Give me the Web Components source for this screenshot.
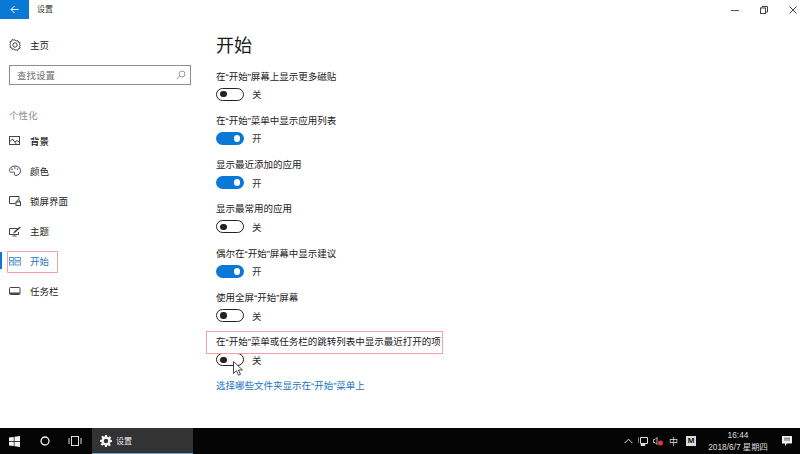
<!DOCTYPE html>
<html lang="zh-CN"><head><meta charset="utf-8"><title>设置</title>
<style>
html,body{margin:0;padding:0;height:454px;overflow:hidden;background:#fff}
body{display:flex;flex-direction:column;font-family:"Liberation Sans","Noto Sans CJK SC",sans-serif;color:#222}
</style></head><body>
<win-titlebar></win-titlebar>
<win-main>
  <settings-nav slot="nav">
    <nav-item icon="home" style="margin-bottom:5px">主页</nav-item>
    <search-box></search-box>
    <nav-head>个性化</nav-head>
    <nav-item icon="picture" bold>背景</nav-item>
    <nav-item icon="palette">颜色</nav-item>
    <nav-item icon="lock">锁屏界面</nav-item>
    <nav-item icon="theme">主题</nav-item>
    <nav-item icon="start" active>开始</nav-item>
    <nav-item icon="taskbar">任务栏</nav-item>
  </settings-nav>
  <settings-page slot="page">
    <toggle-row label="在“开始”屏幕上显示更多磁贴"></toggle-row>
    <toggle-row label="在“开始”菜单中显示应用列表" on></toggle-row>
    <toggle-row label="显示最近添加的应用" on></toggle-row>
    <toggle-row label="显示最常用的应用"></toggle-row>
    <toggle-row label="偶尔在“开始”屏幕中显示建议" on></toggle-row>
    <toggle-row label="使用全屏“开始”屏幕"></toggle-row>
    <toggle-row label="在“开始”菜单或任务栏的跳转列表中显示最近打开的项" mark></toggle-row>
    <page-link>选择哪些文件夹显示在“开始”菜单上</page-link>
  </settings-page>
</win-main>
<task-bar></task-bar>
<script>
const ICONS={
home:'<g fill="none" stroke="#444" stroke-width="1"><circle cx="6" cy="6" r="2.2"/><path d="M6 .8l1.2 1.3 1.7-.5.5 1.7 1.7.5-.5 1.700L11.200 6l-.6 1.500.5 1.700-1.700.5-.5 1.700-1.700-.5L6 11.200l-1.200-1.300-1.700.5-.5-1.700-1.700-.5.5-1.700L.8 6l.6-1.500-.5-1.700 1.700-.5.5-1.700 1.700.5z"/></g>',
picture:'<g fill="none" stroke="#444" stroke-width="1"><rect x=".5" y="1.500" width="10" height="8"/><path d="M.8 6.500l2.700-2.500 4 5.300M6 7l2-1.500 2.500 2"/></g>',
palette:'<g fill="none" stroke="#444" stroke-width="1"><path d="M6 1C2.800 1 .5 2.900.5 5.300c0 2 2 2.200 3.200 1.900 1.500-.4 2.300.3 1.800 1.400-.5 1.200.3 2 1.500 1.900 2.700-.3 4.500-2.300 4.500-4.800C11.500 2.800 9.200 1 6 1z"/></g><g fill="#444"><circle cx="3" cy="4.300" r=".8"/><circle cx="5.800" cy="3" r=".8"/><circle cx="8.600" cy="4" r=".8"/></g>',
lock:'<g fill="none" stroke="#444" stroke-width="1"><path d="M6.500 8.500H.5v-7h9.500v3"/><rect x="7" y="7" width="4.500" height="3.500"/><path d="M8 7V6a1.200 1.200 0 0 1 2.500 0v1"/></g>',
theme:'<g fill="none" stroke="#444" stroke-width="1"><path d="M8.500 3.500H.5v6h9V7M3.500 11h4"/></g><path d="M11 1.500L5.500 6 4 8.500l2.500-1L11.800 2.500z" fill="#444"/>',
start:'<g fill="none" stroke="#5a9fd6" stroke-width="1"><rect x=".5" y="2.500" width="4" height="3"/><rect x="6" y="2.500" width="5.500" height="3"/><rect x=".5" y="7" width="4" height="3"/><rect x="6" y="7" width="5.500" height="3"/></g>',
taskbar:'<g fill="none" stroke="#444" stroke-width="1"><rect x=".5" y="2.500" width="10.500" height="7" rx=".8"/></g><path d="M1 7.500h9.500v1.500H1z" fill="#444"/>'
};
const def=(n,c)=>customElements.define(n,c);
const shadow=(el,html)=>{el.attachShadow({mode:'open'}).innerHTML=html};

def('win-titlebar',class extends HTMLElement{connectedCallback(){shadow(this,`<style>
:host{display:flex;align-items:center;height:19px;flex:none;font-size:8px;color:#333}
.back{width:29px;height:19px;background:#0a78d7;display:flex;align-items:center;justify-content:center}
.t{margin-left:8px;flex:1;position:relative;top:-1px}
.c{box-sizing:border-box;width:29px;height:19px;padding-right:3px;display:flex;align-items:center;justify-content:flex-end}
svg{display:block}
</style>
<div class="back"><svg width="9" height="9" viewBox="0 0 9 9" fill="none" stroke="#fff" stroke-width="1"><path d="M8.500 4.500H1M4.500 1L1 4.500 4.500 8"/></svg></div>
<div class="t">设置</div>
<div class="c"><svg width="8" height="8" viewBox="0 0 8 8"><path d="M0 4.500h8" stroke="#555"/></svg></div>
<div class="c"><svg width="8" height="8" viewBox="0 0 8 8" fill="none" stroke="#444"><rect x=".5" y="2" width="5" height="5.500"/><path d="M2 2V.5h5.500V6H5.500"/></svg></div>
<div class="c"><svg width="8" height="8" viewBox="0 0 8 8" stroke="#444"><path d="M.5.500l7 7M7.500.500l-7 7"/></svg></div>`)}});

def('win-main',class extends HTMLElement{connectedCallback(){shadow(this,`<style>
:host{display:flex;flex:none;height:409px}
</style><slot name="nav"></slot><slot name="page"></slot>`)}});

def('settings-nav',class extends HTMLElement{connectedCallback(){shadow(this,`<style>
:host{display:block;width:200px;flex:none;padding-top:11px;box-sizing:border-box}
</style><slot></slot>`)}});

def('nav-item',class extends HTMLElement{connectedCallback(){
const a=this.hasAttribute('active');
shadow(this,`<style>
:host{display:flex;align-items:center;height:30px;position:relative;font-size:9.500px;padding-left:9px;color:${a?'#1a74c0':'#222'};${this.hasAttribute('bold')?'font-weight:500;':''}}
svg{width:12px;height:12px;flex:none;margin-right:9px;display:block}
.bar{position:absolute;left:0;top:6px;width:2px;height:17px;background:#0a78d7}
.mark{position:absolute;left:7px;top:5px;width:49px;height:20px;border:1px solid #f2a3a8}
</style>${a?'<div class="bar"></div><div class="mark"></div>':''}<svg viewBox="0 0 12 12">${ICONS[this.getAttribute('icon')]}</svg><span><slot></slot></span>`)}});

def('nav-head',class extends HTMLElement{connectedCallback(){shadow(this,`<style>
:host{display:block;height:21px;line-height:21px;margin-top:20px;padding-left:9px;font-size:9.500px;color:#8a8a8a}
</style><slot></slot>`)}});

def('search-box',class extends HTMLElement{connectedCallback(){shadow(this,`<style>
:host{display:flex;align-items:center;justify-content:space-between;box-sizing:border-box;width:182px;height:20px;margin-left:9px;border:1px solid #8e8e8e;padding:0 4px 0 7px;font-size:9.500px;color:#6e6e6e}
svg{display:block}
</style><span>查找设置</span><svg width="10" height="10" viewBox="0 0 10 10" fill="none" stroke="#999"><circle cx="6" cy="4" r="3"/><path d="M3.800 6.200L.8 9.200"/></svg>`)}});

def('settings-page',class extends HTMLElement{connectedCallback(){shadow(this,`<style>
:host{display:block;flex:1;padding-left:16px;font-size:9.500px}
h1{margin:15px 0 0;height:34.500px;line-height:24px;font-size:18px;font-weight:400;color:#1a1a1a}
</style><h1>开始</h1><slot></slot>`)}});

def('toggle-row',class extends HTMLElement{connectedCallback(){
const on=this.hasAttribute('on'),m=this.hasAttribute('mark');
shadow(this,`<style>
:host{display:block;height:44.330px;position:relative;box-sizing:border-box}
.l{height:15px;line-height:15px;white-space:nowrap;color:#222}
.s{display:flex;align-items:center;height:15px;margin-top:3px;color:#333}
.t{box-sizing:border-box;width:28px;height:13px;border-radius:7px;border:${on?'0':'1.500px solid #222'};background:${on?'#0a78d7':'#fff'};display:flex;align-items:center;justify-content:${on?'flex-end':'flex-start'};padding:0 ${on?'4px':'3px'};margin-right:8px}
.k{width:6.500px;height:6.500px;border-radius:50%;background:${on?'#fff':'#222'}}
.m{position:absolute;left:-10px;top:-3px;width:235px;height:21px;border:1px solid #f2a3a8}
.cur{position:absolute;left:17px;top:27px}
</style>${m?'<div class="m"></div>':''}<div class="l">${this.getAttribute('label')}</div>
<div class="s"><div class="t"><div class="k"></div></div><span>${on?'开':'关'}</span></div>
${m?'<svg class="cur" width="10" height="15" viewBox="0 0 10 15"><path d="M.5.500v12l3-2.800 2 4.500 2-.9-2-4.300h4z" fill="#fff" stroke="#333" stroke-width=".9"/></svg>':''}`)}});

def('page-link',class extends HTMLElement{connectedCallback(){shadow(this,`<style>
:host{display:block;height:15px;line-height:15px;margin-top:-1px;color:#1a74c0;white-space:nowrap}
</style><slot></slot>`)}});

def('task-bar',class extends HTMLElement{connectedCallback(){shadow(this,`<style>
:host{display:flex;align-items:center;height:26px;flex:none;background:#050505;color:#eee;font-size:8px}
svg{display:block;flex:none}
.app{box-sizing:border-box;width:101px;height:26px;background:#333;border-bottom:1.500px solid #6aa5d8;display:flex;align-items:center;padding-left:8px;gap:4px}
.sp{flex:1}
.clock{width:60px;margin-left:12px;text-align:center;line-height:12px;font-size:8.300px;color:#ddd;white-space:nowrap}
.ime{width:9px;margin:0 8px 0 6px;font-size:9px;color:#ddd;text-align:center}
.m{box-sizing:border-box;width:10px;height:10px;background:#ddd;color:#111;font:700 8px/10px "Liberation Sans",sans-serif;text-align:center}
</style>
<svg style="margin-left:9px" width="11" height="11" viewBox="0 0 11 11" fill="#f4f4f4"><path d="M0 1.600L4.800.9v4.200H0zM5.500.8L11 0v5.100H5.500zM0 5.800h4.800v4.300L0 9.400zM5.500 5.800H11V11l-5.500-.8z"/></svg>
<svg style="margin-left:20px" width="10" height="10" viewBox="0 0 10 10" fill="none" stroke="#f0f0f0" stroke-width="1.300"><circle cx="5" cy="5" r="4"/></svg>
<svg style="margin-left:18px" width="14" height="10" viewBox="0 0 14 10" fill="none" stroke="#ddd"><rect x="3.500" y=".5" width="7" height="9"/><path d="M1 2v6M13 2v6"/></svg>
<div class="app" style="margin-left:10px"><svg width="12" height="12" viewBox="0 0 12 12"><path fill="#f4f4f4" fill-rule="evenodd" d="M5 0h2l.3 1.700 1.100.5L9.900 1.200l1.400 1.400-1 1.500.5 1.100L12 5v2l-1.700.3-.5 1.100 1 1.500-1.400 1.400-1.500-1-1.100.5L7 12H5l-.3-1.700-1.100-.5-1.500 1-1.400-1.400 1-1.500-.5-1.100L0 7V5l1.700-.3.5-1.100-1-1.500 1.400-1.400 1.500 1 1.100-.5zM6 3.800a2.200 2.200 0 1 0 0 4.400 2.200 2.200 0 0 0 0-4.400z"/></svg><span>设置</span></div>
<div class="sp"></div>
<svg width="9" height="6" viewBox="0 0 9 6" fill="none" stroke="#ddd"><path d="M.5 5.200L4.500 1.200l4 4"/></svg>
<svg style="margin-left:5px" width="10" height="10" viewBox="0 0 10 10" fill="none" stroke="#ddd"><path d="M2.500 1.500h7v6h-7zM0 1v6"/><path d="M3 8.500h4v1H3z" fill="#ddd"/></svg>
<svg style="margin-left:5px" width="10" height="10" viewBox="0 0 10 10"><path d="M.5 3.500h1.500L4 1.500v7L2 6.500H.5z" fill="none" stroke="#ddd" stroke-width=".8"/><circle cx="7.500" cy="7" r="2.500" fill="#e5343f"/></svg>
<div class="ime">中</div>
<div class="m">M</div>
<div class="clock"><div>16:44</div><div>2018/6/7 星期四</div></div>
<svg style="margin-left:14px;margin-right:8px" width="10" height="10" viewBox="0 0 10 10"><path d="M0 0h10v7.500H5L3 10V7.500H0z" fill="#eee"/><path d="M2 2.200h6M2 4h6" stroke="#333" stroke-width=".7"/></svg>`)}});
</script>
</body></html>
